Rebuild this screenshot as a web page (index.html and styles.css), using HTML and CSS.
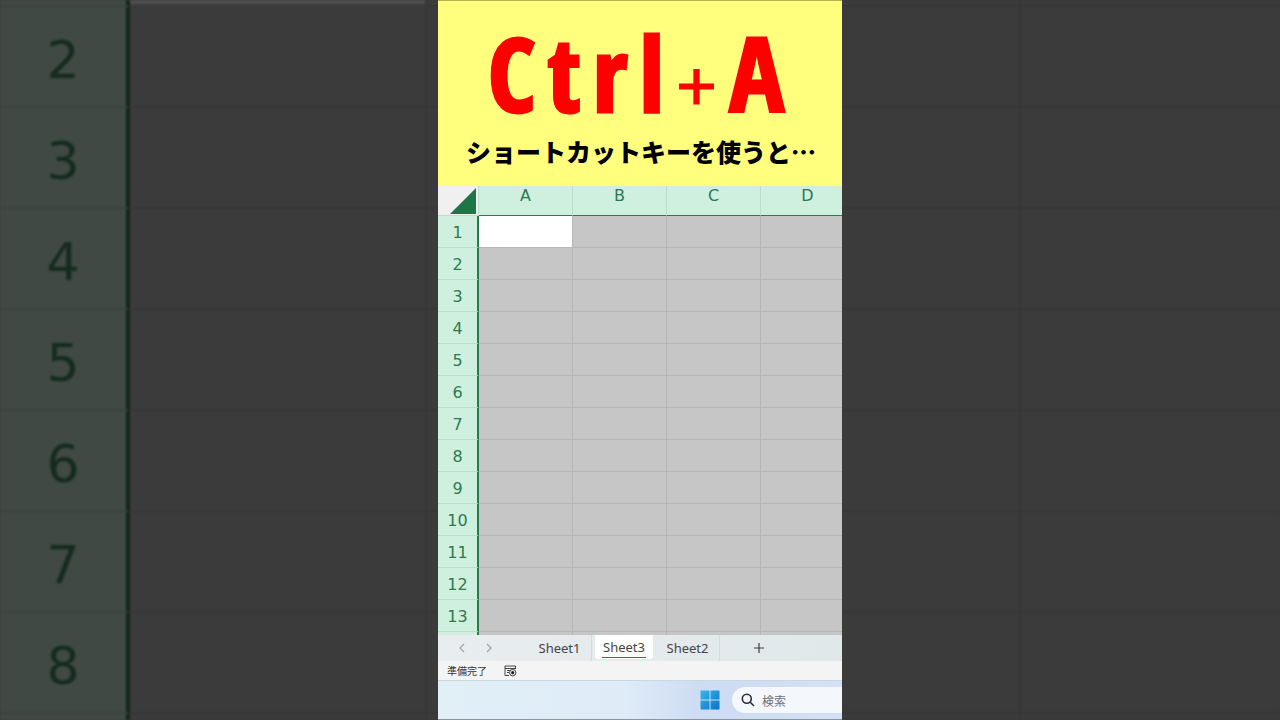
FILE: index.html
```html
<!DOCTYPE html>
<html lang="ja">
<head>
<meta charset="utf-8">
<title>Ctrl + A</title>
<link rel="stylesheet" href="styles.css">
</head>
<body>
<div class="backdrop" aria-hidden="true">
  <div class="big-row first"><span class="big-head"></span><span class="big-cell active"></span><span class="big-cell"></span><span class="big-cell"></span><span class="big-cell"></span></div>
  <div class="big-row"><span class="big-head">2</span><span class="big-cell"></span><span class="big-cell"></span><span class="big-cell"></span><span class="big-cell"></span></div>
  <div class="big-row"><span class="big-head">3</span><span class="big-cell"></span><span class="big-cell"></span><span class="big-cell"></span><span class="big-cell"></span></div>
  <div class="big-row"><span class="big-head">4</span><span class="big-cell"></span><span class="big-cell"></span><span class="big-cell"></span><span class="big-cell"></span></div>
  <div class="big-row"><span class="big-head">5</span><span class="big-cell"></span><span class="big-cell"></span><span class="big-cell"></span><span class="big-cell"></span></div>
  <div class="big-row"><span class="big-head">6</span><span class="big-cell"></span><span class="big-cell"></span><span class="big-cell"></span><span class="big-cell"></span></div>
  <div class="big-row"><span class="big-head">7</span><span class="big-cell"></span><span class="big-cell"></span><span class="big-cell"></span><span class="big-cell"></span></div>
  <div class="big-row"><span class="big-head">8</span><span class="big-cell"></span><span class="big-cell"></span><span class="big-cell"></span><span class="big-cell"></span></div>
  <div class="big-row"><span class="big-head"></span><span class="big-cell"></span><span class="big-cell"></span><span class="big-cell"></span><span class="big-cell"></span></div>
</div>

<main class="clip">
  <header class="banner">
    <h1 class="keys"><span>C</span><span>t</span><span>r</span><span>l</span><span class="plus">+</span><span>A</span></h1>
    <p class="caption">ショートカットキーを使うと…</p>
  </header>

  <div class="sheet">
    <table class="grid">
      <colgroup><col class="col-head"><col><col><col><col></colgroup>
      <thead>
        <tr><th class="corner"><svg width="26" height="26" viewBox="0 0 26 26"><path d="M26 0V26H0Z" fill="#1e7545"/></svg></th><th>A</th><th>B</th><th>C</th><th>D</th></tr>
      </thead>
      <tbody>
        <tr><th>1</th><td class="active"></td><td></td><td></td><td></td></tr>
        <tr><th>2</th><td></td><td></td><td></td><td></td></tr>
        <tr><th>3</th><td></td><td></td><td></td><td></td></tr>
        <tr><th>4</th><td></td><td></td><td></td><td></td></tr>
        <tr><th>5</th><td></td><td></td><td></td><td></td></tr>
        <tr><th>6</th><td></td><td></td><td></td><td></td></tr>
        <tr><th>7</th><td></td><td></td><td></td><td></td></tr>
        <tr><th>8</th><td></td><td></td><td></td><td></td></tr>
        <tr><th>9</th><td></td><td></td><td></td><td></td></tr>
        <tr><th>10</th><td></td><td></td><td></td><td></td></tr>
        <tr><th>11</th><td></td><td></td><td></td><td></td></tr>
        <tr><th>12</th><td></td><td></td><td></td><td></td></tr>
        <tr><th>13</th><td></td><td></td><td></td><td></td></tr>
        <tr><th></th><td></td><td></td><td></td><td></td></tr>
      </tbody>
    </table>
  </div>

  <nav class="tabs">
    <button class="arrow" aria-label="前のシート"><svg width="8" height="10" viewBox="0 0 8 10"><path d="M6 1L2 5L6 9" fill="none" stroke="#a3a8aa" stroke-width="1.3"/></svg></button>
    <button class="arrow" aria-label="次のシート"><svg width="8" height="10" viewBox="0 0 8 10"><path d="M2 1L6 5L2 9" fill="none" stroke="#a3a8aa" stroke-width="1.3"/></svg></button>
    <button class="tab first-tab">Sheet1</button>
    <button class="tab current"><span>Sheet3</span></button>
    <button class="tab">Sheet2</button>
    <button class="add" aria-label="新しいシート"><svg width="10" height="10" viewBox="0 0 10 10"><path d="M5 0V10M0 5H10" stroke="#3c4043" stroke-width="1.2"/></svg></button>
  </nav>

  <div class="status">
    <span>準備完了</span>
    <svg width="13" height="12" viewBox="0 0 13 12" fill="none" stroke="#444" stroke-width="1"><path d="M5 10.5H1V1H11.5V4M1 3.5H11.5M3 5.5H6M3 7.5H5"/><circle cx="8.7" cy="7.7" r="3.2"/><circle cx="8.7" cy="7.7" r="1.6" fill="#222" stroke="none"/></svg>
  </div>

  <footer class="taskbar">
    <button class="start" aria-label="スタート"><svg width="20" height="20" viewBox="0 0 20 20"><defs><linearGradient id="win" gradientUnits="userSpaceOnUse" x1="0" y1="0" x2="20" y2="20"><stop offset="0" stop-color="#3cb9ea"/><stop offset="1" stop-color="#0670c8"/></linearGradient></defs><path fill="url(#win)" d="M1 .5H9.5V9.5H.5V1ZM10.5 .5H19L19.500 1V9.500H10.500ZM.5 10.500H9.500V19.500H1L.5 19ZM10.500 10.500H19.500V19L19 19.500H10.500Z"/></svg></button>
    <label class="search">
      <svg width="14" height="14" viewBox="0 0 14 14" fill="none" stroke="#2b2f36" stroke-width="1.6"><circle cx="5.800" cy="5.800" r="4.500"/><path d="M9 9L13 13"/></svg>
      <input type="text" placeholder="検索" aria-label="検索">
    </label>
  </footer>
</main>
</body>
</html>
```
FILE: styles.css
```css
* {
  box-sizing: border-box;
}

body {
  margin: 0;
  height: 100vh;
  display: flex;
  justify-content: center;
  position: relative;
  overflow: hidden;
  background: #3b3b3b;
  font-family: "DejaVu Sans", "Noto Sans CJK JP", sans-serif;
}

button {
  margin: 0;
  padding: 0;
  border: 0;
  background: none;
  font: inherit;
  color: inherit;
}

svg {
  display: block;
  flex: none;
}

/* Enlarged, dimmed copy of the sheet behind the clip */
.backdrop {
  position: absolute;
  inset: 0;
  overflow: hidden;
  filter: blur(1px);
}

.big-row {
  display: grid;
  grid-template-columns: 130px repeat(4, 297px);
  height: 101px;
}

.big-row.first {
  height: 7px;
}

.big-head {
  display: flex;
  align-items: center;
  justify-content: center;
  padding-top: 6px;
  background: #404943;
  border-right: 4px solid #10251a;
  border-bottom: 2px solid #3b433e;
  color: #142b20;
  font-size: 52px;
  line-height: 1;
}

.first .big-head {
  padding: 0;
}

.big-cell {
  background: #3b3b3b;
  border-right: 2px solid #363636;
  border-bottom: 2px solid #363636;
}

.big-cell.active {
  background: #505050;
  border-bottom: 0;
  margin-bottom: 3px;
}

.clip {
  position: relative;
  height: 100vh;
  aspect-ratio: 101 / 180;
  min-width: 0;
  overflow: hidden;
  display: flex;
  flex-direction: column;
  border-top: 1px solid #b3b358;
  border-bottom: 1px solid #8d959b;
}

.banner {
  background: #ffff7d;
  padding: 16px 0 16px;
}

.keys {
  margin: 0 0 4px;
  padding: 0 58px 0 50px;
  display: flex;
  justify-content: space-between;
  align-items: baseline;
  color: #f00;
  font-family: "Open Sans Condensed", "Roboto Condensed", "Liberation Sans Narrow", sans-serif;
  font-size: 102px;
  font-weight: 700;
  line-height: 112px;
  -webkit-text-stroke: 3px #f00;
}

.plus {
  font-family: "Noto Sans", sans-serif;
  font-size: 72px;
  font-weight: 400;
  line-height: 1;
  -webkit-text-stroke: 1px #f00;
}

.caption {
  margin: 0;
  padding-left: 28px;
  font-family: "Noto Sans CJK JP", sans-serif;
  font-size: 25px;
  font-weight: 900;
  line-height: 37px;
  white-space: nowrap;
}

.sheet {
  flex: 1;
  min-height: 0;
  overflow: hidden;
  background: #c6c6c6;
}

.grid {
  width: 417px;
  table-layout: fixed;
  border-collapse: separate;
  border-spacing: 0;
  color: #2c7a50;
  font-size: 16px;
}

.col-head {
  width: 41px;
}

.grid th,
.grid td {
  height: 32px;
  padding: 0;
  border-right: 1px solid #b6b6b6;
  border-bottom: 1px solid #b6b6b6;
}

.grid th {
  background: #d0f0df;
  font-weight: 400;
  line-height: 20px;
}

.grid thead th {
  height: 30px;
  vertical-align: top;
  border-right-color: #bddccc;
  border-bottom: 1px solid #2a7a50;
}

.grid tbody th {
  padding-top: 3px;
  border-right: 2px solid #2a7a50;
  border-bottom-color: #bddccc;
}

.grid thead .corner {
  background: #f0f0f0;
  padding: 2px 0 0 12px;
  border-bottom-color: #bddccc;
}

.grid .active {
  background: #fff;
}

.tabs {
  display: flex;
  height: 26px;
  padding-left: 12px;
  background: linear-gradient(90deg, #e9edf0, #e0e8ea);
  color: #444;
  font-family: "Noto Sans", sans-serif;
  font-size: 13px;
}

.arrow {
  width: 24px;
  margin-right: 3px;
  display: flex;
  align-items: center;
  justify-content: center;
}

.tab {
  width: 64px;
  border-right: 1px solid #d5dadc;
}

.first-tab {
  margin-left: 24px;
}

.tab.current {
  width: 58px;
  margin: 0 3px;
  height: 24px;
  border: 0;
  border-radius: 0 0 3px 3px;
  background: #fff;
}

.current span {
  display: block;
  margin: 0 7px;
  line-height: 20px;
  border-bottom: 1px solid #23804f;
}

.add {
  width: 78px;
  display: flex;
  align-items: center;
  justify-content: center;
}

.status {
  display: flex;
  align-items: center;
  gap: 17px;
  height: 19px;
  padding-left: 9px;
  background: #f4f4f4;
  color: #333;
  font-family: "Noto Sans CJK JP", sans-serif;
  font-size: 10px;
  line-height: 19px;
}

.taskbar {
  display: flex;
  align-items: center;
  gap: 12px;
  height: 39px;
  padding-left: 262px;
  border-top: 1px solid #ccd6de;
  background: linear-gradient(90deg, #e1eff7 0%, #dfecf8 45%, #cddcf3 65%, #d3e0f5 100%);
}

.search {
  flex: 1;
  min-width: 0;
  display: flex;
  align-items: center;
  gap: 7px;
  height: 26px;
  padding-left: 9px;
  border-radius: 13px 0 0 13px;
  background: #f4f8fd;
}

.search input {
  flex: 1;
  min-width: 0;
  padding: 0;
  border: 0;
  background: none;
  font-family: "Noto Sans CJK JP", sans-serif;
  font-size: 12px;
}

.search input::placeholder {
  color: #6c7179;
}
```
